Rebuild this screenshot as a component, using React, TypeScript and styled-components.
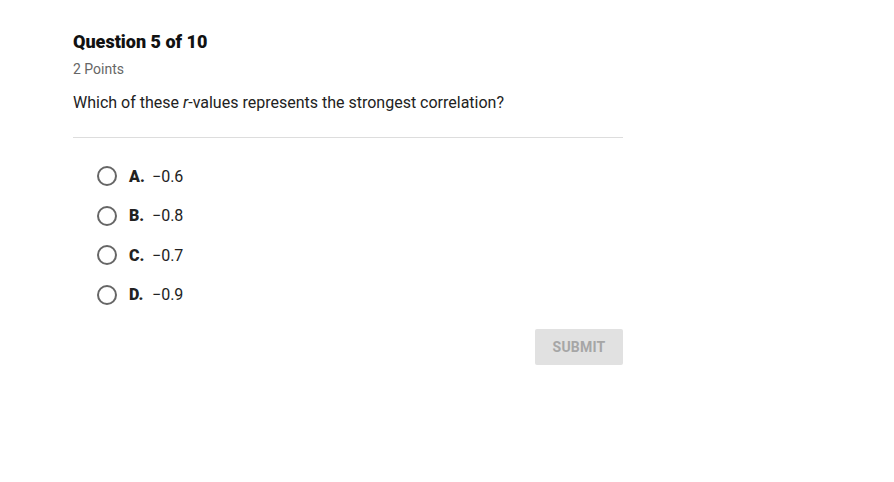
import React from "react";
import styled, { createGlobalStyle } from "styled-components";

const Global = createGlobalStyle`
  html, body { margin: 0; padding: 0; background: #fff; }
  body { font-family: Roboto, "Liberation Sans", Arial, sans-serif; color: #222; }
`;

const Page = styled.div`
  padding: 32px 0 0 73px;
  width: 550px;
`;

const Title = styled.h1`
  margin: 0;
  font-size: 18px;
  font-weight: 900;
  line-height: 20px;
  color: #111;
`;

const Points = styled.div`
  margin-top: 8px;
  font-size: 14px;
  line-height: 18px;
  color: #666;
`;

const Prompt = styled.p`
  margin: 15px 0 0;
  font-size: 16px;
  line-height: 20px;
  color: #222;
`;

const Divider = styled.hr`
  margin: 24px 0 0;
  border: none;
  border-top: 1px solid #ddd;
`;

const Options = styled.div`
  display: flex;
  flex-direction: column;
  gap: 19.5px;
  padding: 28px 0 0 24px;
`;

const Option = styled.label`
  display: flex;
  align-items: center;
  height: 20px;
  font-size: 16px;
  cursor: pointer;
`;

const Radio = styled.span`
  width: 16px;
  height: 16px;
  border: 2px solid #666;
  border-radius: 50%;
  margin-right: 12px;
  flex: none;
`;

const Letter = styled.span`
  font-weight: 900;
  color: #222;
  width: 23px;
`;

const Value = styled.span`
  color: #222;
`;

const Footer = styled.div`
  display: flex;
  justify-content: flex-end;
  margin-top: 24px;
`;

const Submit = styled.button`
  width: 88px;
  height: 36px;
  border: none;
  border-radius: 2px;
  background: #e1e1e1;
  color: #a6a6a6;
  font-family: Roboto, "Liberation Sans", Arial, sans-serif;
  font-size: 14px;
  font-weight: 700;
  letter-spacing: 0.2px;
`;

const options = [
  ["A.", "\u22120.6"],
  ["B.", "\u22120.8"],
  ["C.", "\u22120.7"],
  ["D.", "\u22120.9"],
];

export default function App() {
  return (
    <>
      <Global />
      <Page>
        <Title>Question 5 of 10</Title>
        <Points>2 Points</Points>
        <Prompt>
          Which of these <i>r</i>-values represents the strongest correlation?
        </Prompt>
        <Divider />
        <Options>
          {options.map(([l, v]) => (
            <Option key={l}>
              <Radio />
              <Letter>{l}</Letter>
              <Value>{v}</Value>
            </Option>
          ))}
        </Options>
        <Footer>
          <Submit>SUBMIT</Submit>
        </Footer>
      </Page>
    </>
  );
}
